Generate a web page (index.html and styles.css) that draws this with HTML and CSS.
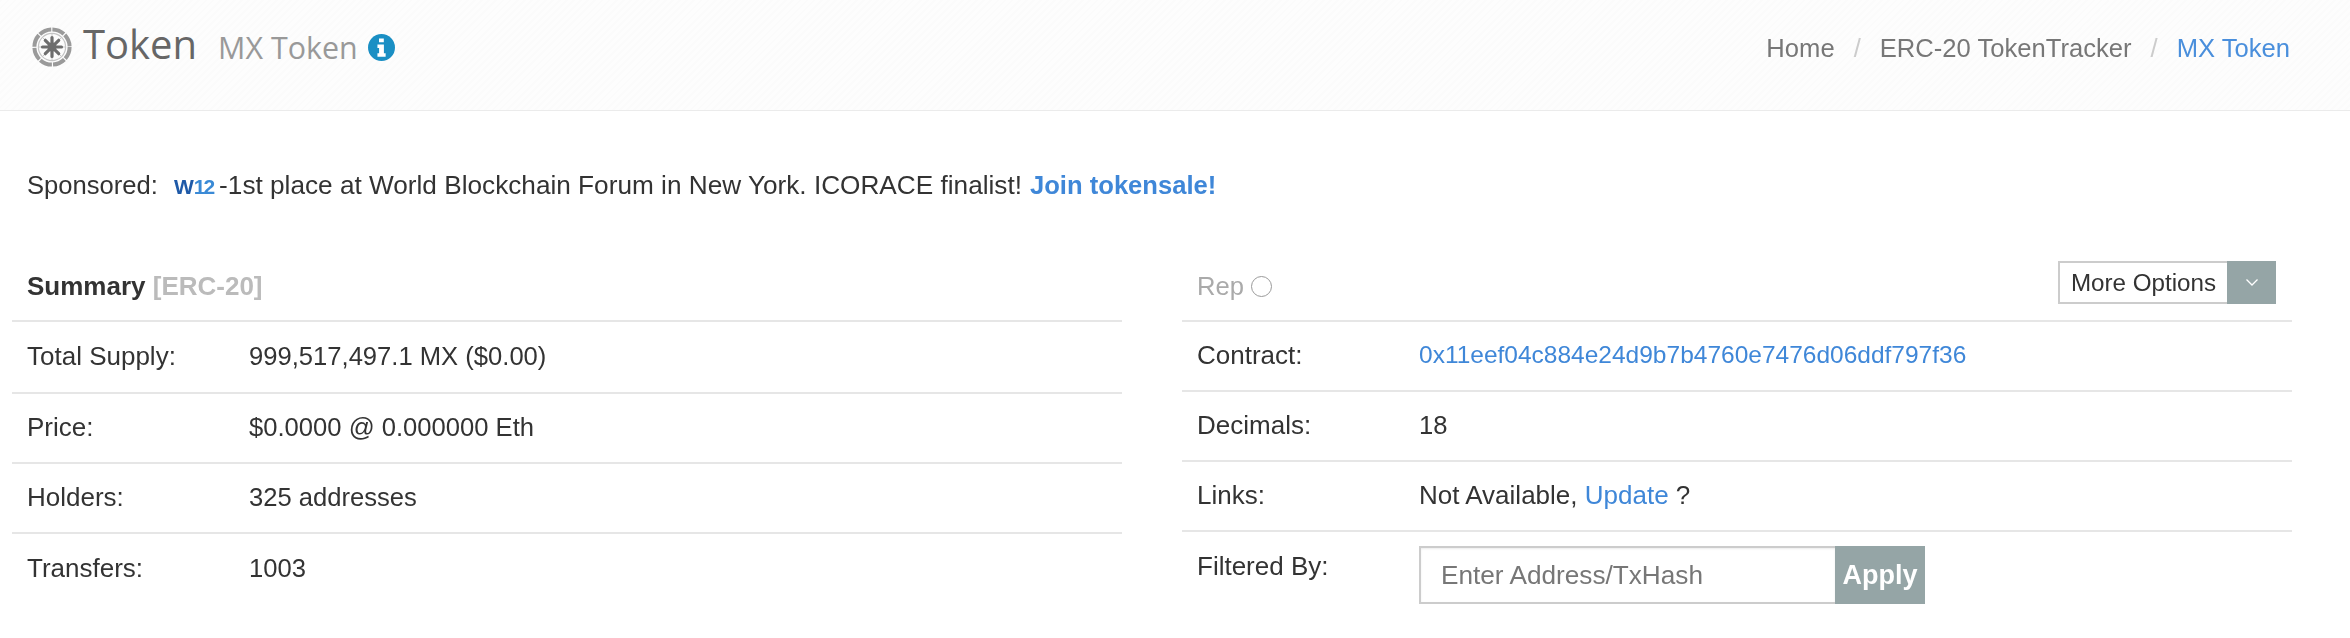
FILE: index.html
```html
<!DOCTYPE html>
<html lang="en">
<head>
<meta charset="utf-8">
<title>MX Token</title>
<link rel="stylesheet" href="styles.css">
</head>
<body>
<header class="topbar">
  <div class="title">
    <svg class="empire" viewBox="0 0 40 40" aria-hidden="true">
      <circle cx="20" cy="20" r="17.6" fill="none" stroke="#9a9a9a" stroke-width="4" stroke-dasharray="12.6 1.2"/>
      <circle cx="20" cy="20" r="13.6" fill="none" stroke="#c4c4c4" stroke-width="1.2"/>
      <path d="M20 7V33M7 20H33M10.800 10.800L29.200 29.200M29.200 10.800L10.800 29.200" stroke="#c8c8c8" stroke-width="1"/>
      <path d="M20 10.500V29.500M10.500 20H29.500M13.300 13.300L26.700 26.700M26.700 13.300L13.300 26.700" stroke="#6e6e6e" stroke-width="3.200" stroke-linecap="round"/>
      <circle cx="20" cy="20" r="4.500" fill="#6e6e6e"/>
    </svg>
    <div class="title-text">
      <h1 class="heading">Token</h1>
      <span class="subheading">MX Token</span>
    </div>
    <svg class="info" viewBox="0 0 28 28" aria-hidden="true">
      <circle cx="14" cy="14" r="14" fill="#1a8fc4"/>
      <path fill="#fff" d="M11.400 4.600h5v4h-5zM9.800 11h6.700v9h1.800v3.600H9.800V20h1.700v-5.400H9.800z"/>
    </svg>
  </div>
  <nav class="crumbs">
    <span class="crumb">Home</span>
    <span class="sep">/</span>
    <span class="crumb">ERC-20 TokenTracker</span>
    <span class="sep">/</span>
    <a class="crumb-link">MX Token</a>
  </nav>
</header>

<p class="sponsor">
  <span>Sponsored:</span>
  <span class="w12"><b class="w12-w">W</b><b class="w12-n">12</b></span>
  <span class="sponsor-text">-1st place at World Blockchain Forum in New York. ICORACE finalist!</span>
  <a class="strong-link">Join tokensale!</a>
</p>

<main class="panels">
  <section class="panel">
    <div class="row row-head">
      <span class="summary">Summary <span class="erc">[ERC-20]</span></span>
    </div>
    <div class="row row-tall"><span class="label">Total Supply:</span><span>999,517,497.1 MX ($0.00)</span></div>
    <div class="row"><span class="label">Price:</span><span>$0.0000 @ 0.000000 Eth</span></div>
    <div class="row"><span class="label">Holders:</span><span>325 addresses</span></div>
    <div class="row row-last"><span class="label">Transfers:</span><span>1003</span></div>
  </section>
  <section class="panel">
    <div class="row row-head">
      <span class="rep">Rep <span class="ring"></span></span>
      <div class="options">
        <span class="options-text">More Options</span>
        <span class="options-caret">
          <svg viewBox="0 0 14 9" width="14" height="9" aria-hidden="true"><path d="M1.500 1.500L7 7l5.500-5.500" fill="none" stroke="#fff" stroke-width="1.300"/></svg>
        </span>
      </div>
    </div>
    <div class="row"><span class="label">Contract:</span><a class="link hash">0x11eef04c884e24d9b7b4760e7476d06ddf797f36</a></div>
    <div class="row"><span class="label">Decimals:</span><span>18</span></div>
    <div class="row"><span class="label">Links:</span><span class="links-text">Not Available, <a class="link">Update</a> ?</span></div>
    <div class="row row-last row-filter">
      <span class="label label-filter">Filtered By:</span>
      <div class="filter">
        <span class="filter-input">Enter Address/TxHash</span>
        <span class="filter-btn">Apply</span>
      </div>
    </div>
  </section>
</main>
</body>
</html>
```
FILE: styles.css
```css
* { box-sizing: border-box; }
html, body { margin: 0; padding: 0; }
body {
  width: 2350px;
  height: 638px;
  background: #fff;
  color: #333;
  font-family: "Liberation Sans", Arial, sans-serif;
  font-size: 25.600px;
  overflow: hidden;
  filter: blur(0.4px);
}
.topbar {
  height: 111px;
  padding: 0 60px 14px 32px;
  display: flex;
  align-items: center;
  justify-content: space-between;
  border-bottom: 1px solid #ebebeb;
  background: repeating-linear-gradient(135deg, #fbfbfb 0 2px, #fdfdfd 2px 5px);
}
.title { display: flex; align-items: center; font-family: "Open Sans", sans-serif; }
.empire { width: 40px; height: 40px; margin: -2px 11px 0 0; }
.title-text { display: flex; align-items: baseline; margin-top: -5px; }
.heading { margin: 0; font-size: 40px; font-weight: 400; color: #666; line-height: 48px; }
.subheading { margin-left: 21px; font-size: 30.400px; color: #999; line-height: 48px; }
.info { width: 27px; height: 27px; margin-left: 10px; margin-top: -1px; }
.crumbs { display: flex; gap: 19px; color: #777; }
.sep { color: #ccc; }
.crumb-link { color: #4a8fdc; }
.sponsor {
  margin: 60px 0 0 27px;
  height: 28px;
  line-height: 28px;
  display: flex;
  align-items: baseline;
}
.sponsor-text { font-size: 26.200px; }
.w12 { margin-left: 16px; margin-right: 6px; font-size: 21px; }
.w12-w { color: #1f5aa8; }
.w12-n { color: #3a8ad6; letter-spacing: -2px; }
.strong-link { margin-left: 8px; color: #3f87d8; font-weight: 700; }
.panels {
  margin-top: 46px;
  padding: 0 58px 0 12px;
  display: grid;
  grid-template-columns: 1110px 1110px;
  column-gap: 60px;
}
.row {
  height: 70px;
  padding: 0 0 2px 15px;
  display: flex;
  align-items: center;
  border-bottom: 2px solid #e6e6e6;
}
.row-head { height: 77px; justify-content: space-between; padding: 8px 16px 0 15px; }
.row-tall { height: 72px; }
.row-last { border-bottom: 0; }
.label { width: 222px; flex: none; font-size: 26px; }
.links-text { font-size: 26px; }
.summary { font-size: 26px; font-weight: 700; }
.erc { color: #bbb; }
.rep { color: #aaa; display: flex; align-items: center; gap: 7px; }
.ring { width: 21px; height: 21px; border: 1.500px solid #999; border-radius: 50%; }
.options { display: flex; height: 43px; margin-bottom: 8px; font-size: 24.200px; }
.options-text {
  width: 169px;
  border: 2px solid #ccc;
  border-right: 0;
  display: flex;
  align-items: center;
  justify-content: center;
}
.options-caret {
  width: 49px;
  background: #95a5a6;
  display: flex;
  align-items: center;
  justify-content: center;
}
.link { color: #3f87d8; }
.hash { font-size: 24.500px; }
.row-filter { align-items: flex-start; padding-top: 14px; }
.label-filter { margin-top: 5px; }
.filter { display: flex; height: 58px; }
.filter-input {
  width: 416px;
  border: 2px solid #ccc;
  border-right: 0;
  padding-left: 20px;
  display: flex;
  align-items: center;
  font-size: 26.200px;
  color: #777;
  box-shadow: inset 0 1px 2px rgba(0,0,0,.08);
}
.filter-btn {
  width: 90px;
  background: #95a5a6;
  color: #fff;
  font-size: 27px;
  font-weight: 700;
  display: flex;
  align-items: center;
  justify-content: center;
}
```
